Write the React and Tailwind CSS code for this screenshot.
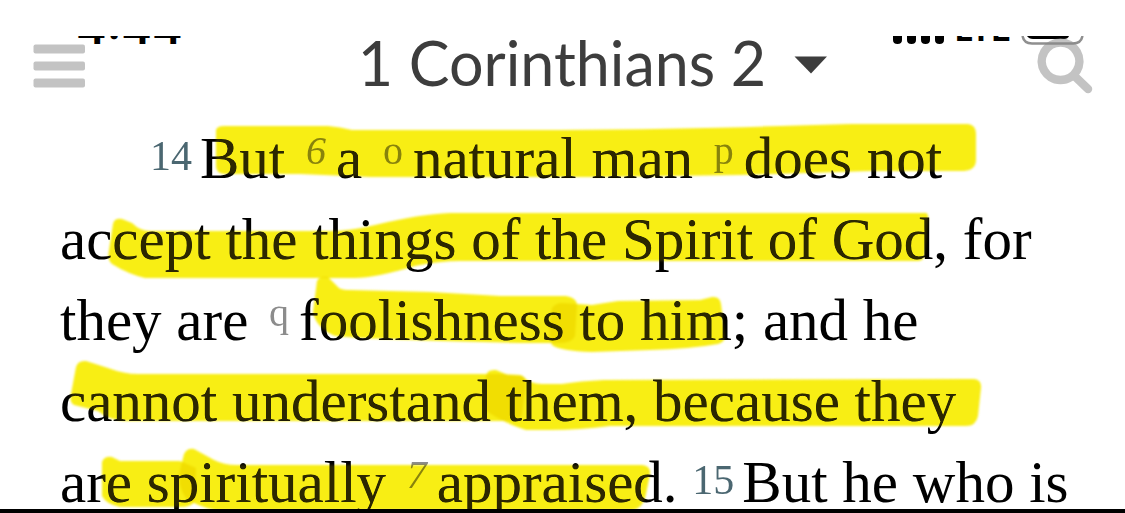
const STROKES = [
  "M216 130Q217 126 224 126L328 126Q340 127 352 130L560 130Q680 129 780 126L850 124L968 124Q976 125 976 134L976 160Q976 170 964 171L870 171L740 175L600 177L370 177L300 174L224 174Q216 173 216 166Z",
  "M113 224Q114 218 122 219L132 223Q140 231 150 231L330 231Q350 231 375 225Q420 214 450 213L926 213Q929 214 928 222L925 254Q924 261 918 261L460 261Q440 261 415 266Q375 278 355 278L145 278Q128 274 112 264Q107 260 109 250Z",
  "M317 281Q320 276 328 277L339 288Q342 290 350 290L430 292L500 296L566 296Q577 298 577 305L575 336Q572 343 560 343L520 343L440 341L360 338L335 336Q316 328 313 312Z",
  "M552 308Q556 303 562 303L592 305L618 301L700 300L712 297Q720 296 721 304L725 336Q725 342 718 344Q690 349 650 350L592 352Q560 351 552 345Q547 335 552 308Z",
  "M76 367Q78 360 86 361L108 368Q124 374 138 374L500 374L520 375Q527 377 526 384L522 414Q520 421 512 421L125 421Q108 420 98 411Q86 408 74 405Q69 402 71 394Z",
  "M486 376Q487 369 496 370L508 375L522 376Q530 384 542 384L562 384Q580 381 604 380L974 379Q982 380 981 388L978 416Q976 426 966 426L610 426Q580 430 550 430L526 430Q510 425 500 419Q482 410 482 404Z",
  "M102 462Q104 456 112 457L120 461L180 461L196 468L194 502Q192 506 184 507L120 507Q106 504 102 496Z",
  "M184 454Q187 448 194 449L214 460Q224 465 236 465L642 465Q651 466 650 474L646 494Q643 509 632 510L215 510Q196 506 186 498Q177 486 180 470Z",
];

function Marker({ className, strokeClass }) {
  return (
    <svg
      aria-hidden="true"
      viewBox="0 118 1125 395"
      className={"pointer-events-none absolute left-0 top-0 h-[395px] w-[1125px] blur-[1px] " + className}
    >
      {STROKES.map((d) => (
        <path key={d} d={d} className={strokeClass} />
      ))}
    </svg>
  );
}

function Verse({ n }) {
  return (
    <a href={"#verse-" + n} className="relative bottom-2 mr-2 text-[42px] leading-none text-[#4b6771]">
      {n}
    </a>
  );
}

function Note({ id, italic }) {
  return (
    <a
      href={"#note-" + id}
      className={"relative bottom-3.5 ml-1.5 mr-2.5 text-[40px] leading-none text-[#8c8c8c] " + (italic ? "italic" : "")}
    >
      {id}
    </a>
  );
}

function StatusBar() {
  return (
    <div className="flex h-[10px] items-end justify-between overflow-hidden pl-[76px] pr-[40px] text-black">
      <span className="mb-0.5 h-2 overflow-hidden font-['Inter',sans-serif] text-[46px] font-semibold">
        <span className="-mt-[31px] block leading-[44px]">4:44</span>
      </span>
      <div className="flex h-[10px] items-start">
        <svg viewBox="0 0 52 10" className="h-[10px] w-[52px]" aria-hidden="true">
          <path d="M0 0h9v4q0 4-4.500 4T0 4zM14 0h9v4q0 4-4.500 4T14 4zM28 0h9v4q0 4-4.500 4T28 4zM42 0h9v4q0 4-4.500 4T42 4z" />
        </svg>
        <span className="ml-2.5 h-1.5 w-[58px] overflow-hidden font-['Inter',sans-serif] text-[32px] font-bold">
          <span className="-mt-[24px] block leading-[36px]">LTE</span>
        </span>
        <svg viewBox="0 0 64 10" className="ml-2 h-[10px] w-[64px]" aria-hidden="true">
          <path d="M1.500 0Q3 7.500 11 7.500H52Q60 7.500 61.500 0" fill="none" stroke="#8f8f8f" strokeWidth="2.500" />
          <path d="M6 0Q8 3 12 3H43Q47 3 48 0Z" />
        </svg>
      </div>
    </div>
  );
}

export default function App() {
  return (
    <div className="flex h-screen flex-col overflow-hidden bg-white pt-9">
      <StatusBar />
      <header className="relative -mt-2 flex h-20 shrink-0 items-start justify-between pl-[33px] pr-[32px]">
        <button aria-label="Menu" className="mt-1.5">
          <svg viewBox="0 0 52 44" className="h-[44px] w-[52px]" fill="#c3c3c3">
            <rect x="0.500" y="0.500" width="51.500" height="9" rx="2" />
            <rect x="0.500" y="17.500" width="51.500" height="9" rx="2" />
            <rect x="0.500" y="34.500" width="51.500" height="9" rx="2" />
          </svg>
        </button>
        <button className="ml-16 flex items-center gap-7 font-['Lato',sans-serif] text-[61px] leading-[50px] text-[#3d3d3d]">
          1 Corinthians 2
          <svg viewBox="0 0 34 18" className="mt-1 h-[18px] w-[34px]" fill="currentColor" aria-hidden="true">
            <path d="M0.500 0.500H33L17 17.500Z" />
          </svg>
        </button>
        <button aria-label="Search">
          <svg viewBox="0 0 56 56" className="h-[56px] w-[56px]" fill="none" stroke="#888" strokeOpacity="0.5">
            <path
              d="M23.500 4.500a18.800 18.800 0 1 0 .1 0M37.500 38L51 51"
              strokeWidth="8.500"
              strokeLinecap="round"
            />
          </svg>
        </button>
      </header>
      <main className="relative isolate min-h-0 flex-1 overflow-hidden bg-white">
        <p className="whitespace-nowrap pl-[60px] font-['Liberation_Serif',serif] text-[59px] leading-[81px] text-black">
          <span className="block pl-[90px]">
            <Verse n="14" />
            But <Note id="6" italic />a <Note id="o" />natural man <Note id="p" />does not
          </span>
          <span className="block">accept the things of the Spirit of God, for</span>
          <span className="block">
            they are <Note id="q" />foolishness to him; and he
          </span>
          <span className="block">cannot understand them, because they</span>
          <span className="block">
            are spiritually <Note id="7" italic />appraised. <Verse n="15" />
            But he who is
          </span>
        </p>
        <Marker className="fill-[#f8ee14] mix-blend-multiply" strokeClass="mix-blend-multiply" />
        <Marker className="fill-[#2c2700] mix-blend-lighten" strokeClass="" />
      </main>
      <div className="h-1 shrink-0 bg-black" />
    </div>
  );
}
